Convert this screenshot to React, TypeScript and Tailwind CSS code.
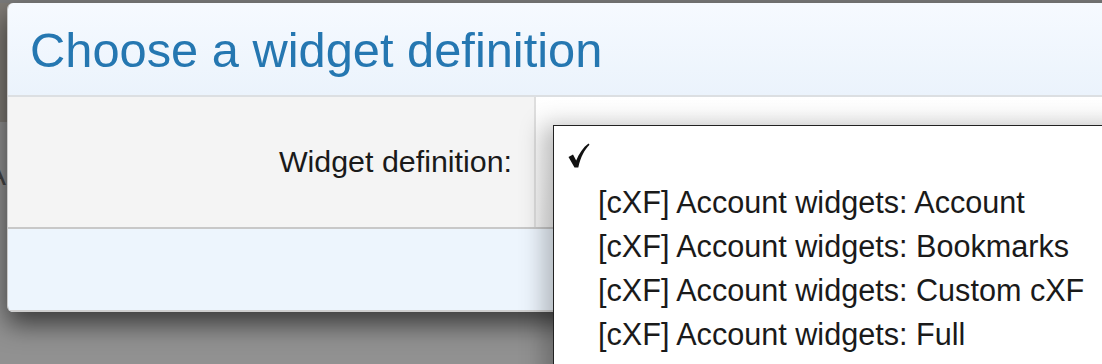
import React from "react";

const items = [
  "[cXF] Account widgets: Account",
  "[cXF] Account widgets: Bookmarks",
  "[cXF] Account widgets: Custom cXF",
  "[cXF] Account widgets: Full",
];

export default function App() {
  return (
    <div
      className="relative w-[1102px] h-[364px] overflow-hidden bg-[#919191]"
      style={{ fontFamily: '"Liberation Sans", Arial, Helvetica, sans-serif' }}
    >
      {/* background page behind modal */}
      <div className="absolute left-0 top-0 w-[20px] h-[122px] bg-[#7f7b75]" />
      <div className="absolute left-0 top-0 w-full h-[3px] bg-[#7a7a7a]" />
      <div className="absolute left-[-14px] top-[160px] text-[30px] leading-none text-[#444]">A</div>
      <div className="absolute left-[-16px] top-[200px] text-[52px] leading-none text-[#111]">/</div>

      {/* modal */}
      <div className="relative ml-[7px] mt-[3px] w-[1120px] rounded-[6px] border-l border-[#c9c9c9] shadow-[0_12px_26px_rgba(0,0,0,0.6)] overflow-hidden">
        <div className="h-[94px] flex items-center pl-[22px] pt-[3px] bg-gradient-to-b from-[#f6faff] to-[#ebf3fc] border-b-2 border-[#dcdfe2]">
          <h1 className="text-[48.8px] leading-none text-[#2577b1]">Choose a widget definition</h1>
        </div>
        <div className="flex h-[132px] border-b-2 border-[#c8c8c8]">
          <div className="w-[528px] flex items-center justify-end pr-[22px] pb-[2px] bg-[#f4f4f4] border-r-2 border-[#dedede]">
            <span className="text-[30.4px] leading-none text-[#1a1a1a]">Widget definition:</span>
          </div>
          <div className="flex-1 bg-gradient-to-b from-white to-[#f2f2f2]" />
        </div>
        <div className="h-[83px] bg-[#edf5fd] border-b-2 border-[#cfcfcf]" />
      </div>

      {/* open select menu */}
      <div className="absolute left-[553px] top-[125px] w-[600px] h-[260px] bg-white border-l border-t border-[#222] shadow-[-10px_0_22px_rgba(0,0,0,0.25)] pt-[10px] text-[30.6px] text-[#1a1a1a]">
        <div className="h-[44px] flex items-center pl-[14px]">
          <svg width="22" height="26" viewBox="0 0 22 26" className="mt-[-4px]">
            <path
              d="M0.5 14 L5 11.5 L8.2 17.5 C11 10.5 15 4.5 20.5 0.5 L21.5 1.8 C16.5 7 12.8 13.5 10.3 24.5 L6.5 24.5 Z"
              fill="#111"
            />
          </svg>
        </div>
        {items.map((t) => (
          <div key={t} className="h-[44px] flex items-center pl-[44px] leading-none whitespace-nowrap">
            {t}
          </div>
        ))}
      </div>
    </div>
  );
}
